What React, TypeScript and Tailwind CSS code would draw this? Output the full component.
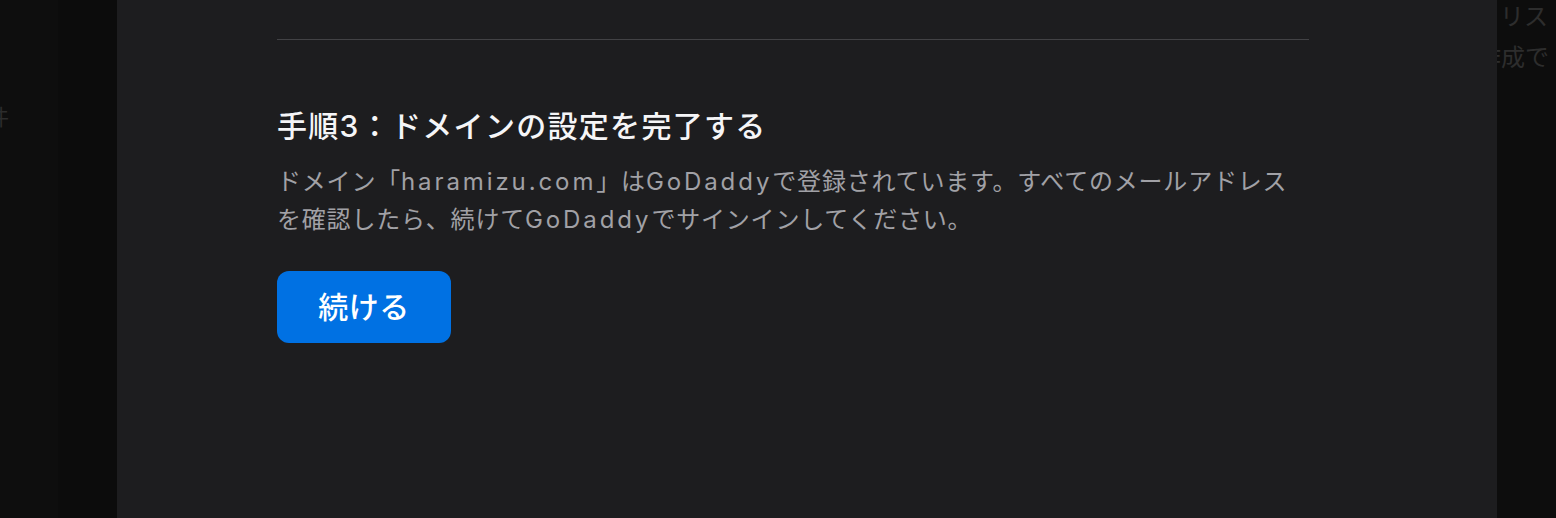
import React from "react";

const jp = { fontFamily: '"Inter", "Noto Sans CJK JP", sans-serif' };

function L({ children }: { children: React.ReactNode }) {
  return <span className="tracking-[2.9px]">{children}</span>;
}

export default function App() {
  return (
    <div className="flex h-[518px] w-[1556px] overflow-hidden bg-[#0d0d0d]" style={jp}>
      <div className="flex w-[117px] shrink-0">
        <div className="w-[58px] bg-[#0e0e0e]">
          <div className="-ml-[13px] mt-[104px] text-[22px] leading-[26px] text-[#2c2c2c]">件</div>
        </div>
        <div className="w-[59px] bg-[#0c0c0c]" />
      </div>
      <div className="w-[1380px] shrink-0 bg-[#1d1d1f] pl-[160px]">
        <div className="w-[1032px] pt-[39px]">
          <div className="h-px bg-[#424245]" />
          <h2 className="mt-[68px] text-[30px] leading-[36px] font-medium tracking-[1.3px] text-[#f5f5f7]">
            手順3：ドメインの設定を完了する
          </h2>
          <p className="mt-[19px] w-[1015px] text-[24px] leading-[38px] tracking-[0.8px] text-[#a1a1a6]">
            ドメイン「<L>haramizu.com</L>」は<L>GoDaddy</L>で登録されています。すべてのメールアドレスを確認したら、続けて<L>GoDaddy</L>でサインインしてください。
          </p>
          <button className="mt-[32px] flex h-[72px] w-[174px] items-center justify-center rounded-[12px] bg-[#0071e3] text-[30px] font-medium tracking-[0.5px] text-white">
            続ける
          </button>
        </div>
      </div>
      <div className="flex-1 overflow-hidden bg-[#0d0d0d]">
        <div className="-ml-[20px] w-[200px] text-[24px] leading-[41px] text-[#2d2d2d]">
          <div className="-mt-[4px] ml-[-1px] whitespace-nowrap">トリス</div>
          <div className="whitespace-nowrap">作成で</div>
        </div>
      </div>
    </div>
  );
}
